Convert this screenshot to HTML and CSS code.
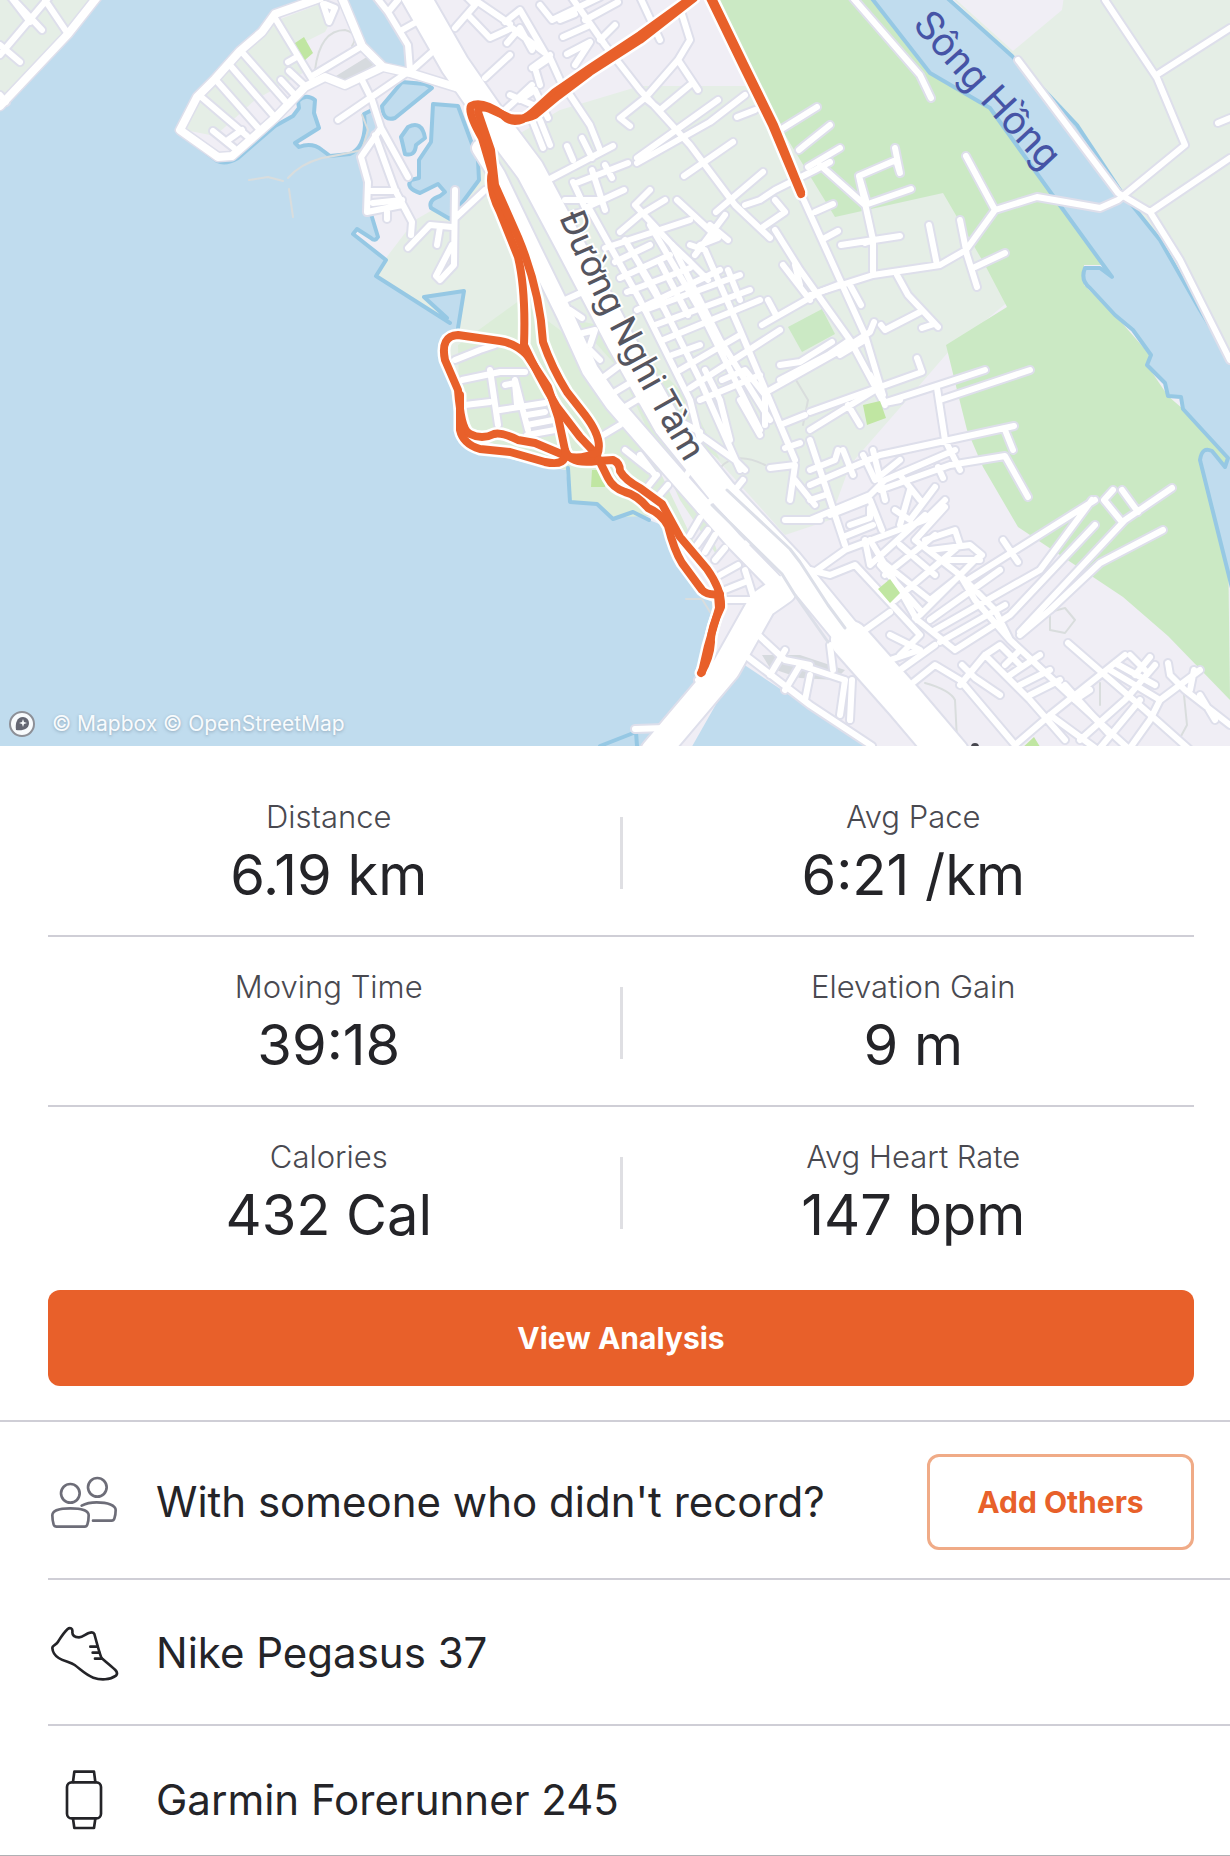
FILE: index.html
```
<!DOCTYPE html>
<html lang="en">
<head>
    <meta charset="UTF-8">
    <meta name="viewport" content="width=device-width, initial-scale=1.0">
    <title>Activity</title>
    <link rel="stylesheet" href="styles.css">
</head>
<body>
    <div class="map">
        <svg class="map-canvas" viewBox="0 0 1230 746" role="img" aria-label="Route map">
            <defs>
                <g id="streets">
                    <!-- west shore -->
                    <path d="M12 -2L42 30M45 0L68 34M50 -4L0 55M0 45L20 62M30 22L10 -4M0 95L6 102"/>
                    <!-- peninsula -->
                    <path d="M275 18L312 79M241 51L285 101M229 64L273 115M215 79L260 130M199 95L247 136M213 131L234 148M228 140L242 130M288 62L295 58M281 80L294 94M289 71L305 86M325 4L335 8L329 22L323 4M312 76L362 46M338 120L405 74M362 80L372 100L381 128L408 177M375 135L395 190L412 222L411 235M381 128L361 157L368 182L367 212L402 205M370 191L396 191M373 203L402 200M387 210L387 219M408 248L430 225L452 227M440 227L437 245M455 190L454 265L440 280L436 276L452 245M485 190L455 218"/>
                    <!-- north blocks -->
                    <path d="M377 -2L388 12L408 45L410 70M388 12L398 0M402 30L420 20M412 70L440 45M455 28L475 5L465 -5M468 15L490 38L512 28L545 53L520 10L505 22M475 0L510 24M507 43L520 28L532 50M485 78L510 55M505 110L532 85M510 95L533 105M532 68L550 55M540 85L535 68L550 58L560 80L590 125L600 150M520 100L535 90L548 118M530 115L543 148M540 120L550 145M570 -5L605 45L640 90L690 145L735 205L770 238M540 5L552 20L600 -3M560 20L575 14M563 37L590 25M567 54L590 42L575 65M585 20L618 2M600 40L615 25M640 -3L660 40M680 8L690 40L678 60L645 98M678 60L698 90M645 98L620 118L630 126M645 98L660 110L690 85"/>
                    <!-- middle blocks -->
                    <path d="M548 180L613 146M567 146L573 160M582 138L592 158M574 184L628 163M573 182L585 208L624 190M592 170L605 210M605 165L612 178M637 163L710 122L745 95M637 158L718 100M737 117L755 110M684 176L733 142M677 200L718 238M635 205L650 190M635 205L672 245L690 262L708 280M716 212L763 172M745 205L760 200L775 190L815 170L830 162M775 200L785 212L763 227M718 238L700 245M710 225L728 240M695 255L725 215M620 232L640 215L665 200M590 210L640 300L690 400L700 440M605 248L690 220M615 262L650 245M620 278L670 255M627 292L690 268M637 310L720 270M600 200L565 200M570 215L590 210M565 300L587 290M570 310L582 318M575 335L595 330L590 345M590 350L600 360"/>
                    <path d="M625 240L655 290L700 380L740 470M650 225L700 310L760 430M672 245L720 340L770 420M690 245L705 250L740 330L795 460M645 310L740 275M655 325L750 290M663 340L760 300M672 355L700 345M680 370L740 335M690 388L780 330M700 400L760 375M640 268L665 310M660 262L688 315M728 270L740 300M762 325L820 292L838 285M780 365L800 362L832 342M783 265L810 300M795 265L800 285M768 300L776 315M700 435L735 460L745 470M735 490L743 480M700 432L640 400M705 370L720 400L730 440M722 380L745 370L765 395L765 425M740 400L760 435M780 425L805 415M785 448L800 443M770 468L795 465L790 500M785 520L820 520M795 480L815 505M600 380L620 365M610 395L635 380M620 410L645 395M595 440L620 425M625 450L650 470M640 455L655 475"/>
                    <!-- lake shore estate -->
                    <path d="M455 360L480 350L495 345M462 380L500 372L525 372M490 370L498 425M465 405L490 402M515 380L528 430M500 410L545 403M505 385L515 383L517 405M527 415L545 412M527 425L553 420M527 435L555 430"/>
                    <path d="M645 490L657 475M655 500L668 485M690 535L700 518M697 545L708 530M705 552L715 535M715 560L725 548M720 575L738 565M725 590L745 582M720 600L750 600M745 570L755 602M690 470L680 485M712 500L700 510M735 515L725 525M755 535L745 545"/>
                    <!-- riverside -->
                    <path d="M780 130L817 107M799 150L805 145L830 125M808 167L840 148M820 165L865 205M866 200L859 176L896 160L900 173L895 148M865 205L911 189M859 176L873 240L873 272M841 245L900 236M865 243L873 240M929 225L937 265M960 220L967 255L977 287M966 156L995 210L966 250L940 265L873 275L810 295M975 267L1005 253M995 210L1037 197L1100 208L1118 200L1185 145L1157 78L1105 0M1158 74L1230 28M1218 123L1230 118M1150 212L1230 158M1118 193L1150 212L1180 260L1230 360M1018 60L1118 193M853 -2L920 75L931 98M801 194L840 280L865 335L883 395M775 230L800 270L850 340L885 405M815 212L833 204M825 238L838 231M850 285L861 305M897 275L908 295L938 327M920 312L885 330L881 325M922 328L934 324M850 345L870 332L874 322M850 345L770 390M850 340L828 355L780 380M865 340L840 355M917 358L922 372L810 412M886 402L936 386L985 370M940 400L1030 370M870 375L885 403L900 400"/>
                    <!-- east blocks -->
                    <path d="M810 430L875 390M848 405L860 425M937 388L945 440L960 470M843 450L853 475M863 455L875 480L900 460M873 450L885 500M868 500L830 515M870 500L882 530M810 485L880 455L1014 426M880 490L950 465L1005 456L1028 497M1005 430L1013 450M938 467L943 478M900 475L920 500M810 440L845 545M810 470L835 460L838 450M810 500L825 495M810 520L870 495L885 480L955 450M810 575L845 550L925 520L945 500M850 525L870 518L870 508M843 537L873 525M935 487L910 520L895 510M910 490L900 525M945 507L915 540L960 575L995 610L1010 640M925 515L870 565L865 540M880 560L930 600L955 580M880 565L920 610M870 540L900 590L917 620M900 545L935 575M895 600L960 545M885 575L935 535M920 615L980 555M930 620L1000 570M935 630L1040 570L1092 500M940 642L1005 605M955 650L1010 615L1095 525M915 618L955 650M1003 540L1018 562M968 580L1095 500M1020 632L1125 520L1172 488M1020 635L1050 610L1100 563L1163 530M1113 490L1104 500L1122 522M1122 490L1138 512M925 540L955 530L960 545M930 550L970 545L982 555M940 560L980 560M960 575L975 600L1010 640L1075 700L1130 750M890 635L920 650L890 660"/>
                    <path d="M810 570L830 575L855 565L920 635L900 655M865 630L890 612M900 670L935 645M910 685L935 665L960 680L1015 745M960 685L985 655L1030 700L1065 740M962 665L975 678L1000 695M985 655L1000 645L1020 665M1005 665L1020 650M1010 675L1040 655M1020 685L1050 670M1030 695L1060 680M1015 745L1050 715L1125 655M1068 643L1145 710L1190 750M1050 715L1095 748M1065 685L1110 735M1075 700L1090 690M1080 740L1125 700L1155 665M1110 670L1160 700L1150 720M1115 663L1155 685M1130 655L1145 670M1160 700L1200 670M1168 663L1170 675L1185 690L1230 725M1190 690L1194 670M1135 675L1150 657M1200 695L1215 720M1100 748L1140 700M1130 748L1150 720"/>
                    <path d="M755 632L785 660L810 665M745 655L810 705L872 746M770 675L785 650M785 690L800 665L845 680M805 700L810 675M845 680L840 715M852 680L850 720M830 645L833 670M635 729L665 728L675 740M698 680L710 695"/>
                </g>
                <g id="avenues">
                    <path d="M320 -2L275 14L262 32L240 51L215 79L197 97L180 130L218 157L232 156L275 118L305 87L325 77L345 85L383 67L410 73L465 90M342 -2L362 46L383 67M98 -4L68 34L0 106"/>
                </g>
                <g id="boulevard">
                    <path d="M480 148L497 175L533 250L565 315L590 370L613 403L667 465L733 540L780 588"/>
                </g>
                <g id="highways">
                    <path d="M412 -10L455 65L500 130L530 170L570 245L620 340L668 425L722 492L788 562L848 635L905 700L950 755"/>
                    <path d="M782 590L762 604L726 668L694 706L655 752"/>
                </g>
                <g id="interchange">
                    <path d="M850 640L905 702L950 755"/>
                </g>
                <g id="route">
                    <path d="M694 -4L640 35L590 68L555 92L533 112Q515 128 503 115Q482 100 471 106Q467 112 482 138L492 172Q488 188 500 212L518 257Q526 290 524 345Q538 375 557 407L580 437L597 455"/>
                    <path d="M694 -2L640 40L590 72L558 96L535 115Q525 120 510 118L490 109Q478 105 478 112L491 150L495 185L518 237Q540 290 543 342Q552 368 567 392L585 415Q604 440 597 455"/>
                    <path d="M527 355Q515 343 500 341L458 335Q440 336 445 360L458 390Q461 430 470 434Q482 440 494 434Q502 432 518 440L535 443L566 456Q580 460 597 453"/>
                    <path d="M460 395V430Q463 444 480 449L510 452L545 462Q568 467 565 450L558 417L548 387L527 355"/>
                    <path d="M565 450Q570 465 597 461L613 460Q620 463 620 471Q625 480 640 488L662 504L680 537L707 569Q722 590 721 607Q710 630 711 642Q710 658 701 673"/>
                    <path d="M599 460L608 478Q613 488 625 492Q637 495 648 508Q662 514 668 526Q674 550 682 563L702 590Q708 596 720 594M718 595L719 608L708 646L702 672"/>
                    <path d="M709 -4L742 64L772 125L801 194M711 -4L744 64L774 125L801 192"/>
                </g>
            </defs>

            <rect class="water" width="1230" height="746"/>

            <path class="land-green" d="M0 0H98L70 34L0 108Z"/>
            <path class="land" d="M320 -4L275 14L262 32L240 51L215 79L197 97L180 130L217 160Q226 166 238 158L275 126L293 116L299 108L298 101Q306 93 315 100L314 113L319 128L295 143L299 147Q312 142 322 150L330 156L350 154Q364 148 365 125L364 115L378 108L381 130L362 157L370 182L368 212L378 237Q375 242 371 238L357 229L353 234L386 260L376 276L448 322L424 297L464 291L458 328L443 345L455 385L458 430L470 450L545 467L566 470L570 502L597 504L613 519L633 512L649 520L667 527L677 560L703 597L718 605L708 646L696 688L650 750H690L740 662L872 750H1240V-4H377L408 45V68L383 67L362 46L342 -4Z"/>
            <path class="land-green" d="M278 20L320 4L337 10L325 32L297 46L308 70L255 100L215 136L185 130L199 97L240 51Z"/>
            <path class="land-green" d="M376 276L386 258L415 220L450 200L480 165L500 145L560 110L640 86H745L960 200L1010 300L950 350L905 402L850 465L830 520L785 535L700 440L597 504L570 502L566 470L458 430L443 345L458 328L464 291L424 297L448 322Z"/>
            <path class="land-lawn" d="M520 300L458 345L460 430L545 465L568 470L570 502L597 504L613 517L660 516L700 560L712 580L640 430L560 330Z"/>
            <path class="land-lawn" d="M575 320L620 370L680 500L720 560L700 500L680 430L720 460L690 400L620 330Z"/>
            <path class="park" d="M708 -4H880L930 73L990 108L1051 193L1105 265H1084V285L1115 315L1150 355L1147 365L1168 396L1183 409L1227 455L1230 700L1168 636L1123 597L1018 527L983 467L967 430L957 390L946 345L1007 307L985 265L943 193L835 217L785 135Z"/>
            <path class="park" d="M788 327L822 309L835 334L802 352Z"/>
            <path class="land-green" d="M950 -4L1012 56L1077 125L1120 190L1160 240L1200 310L1230 365V-4Z"/>
            <path class="built" d="M336 76L370 55L378 62L345 84ZM762 655L800 655L845 670L835 680L800 678L770 668Z"/>

            <path class="water shore" d="M870 -4L930 73L990 108L1051 193L1112 277L1100 268H1085Q1080 280 1090 288L1115 315L1133 330L1151 355L1147 365L1165 383L1168 396L1181 397L1183 409L1228 458L1225 467L1212 451Q1202 446 1200 460L1240 620V375L1200 310L1160 240L1120 190L1077 125L1012 56L945 -4Z"/>
            <path class="land" d="M952 -4H1064L1062 10L1013 51Z"/>
            <path class="water shore" d="M433 104L458 106L478 160L479 180L450 219L431 208Q428 200 440 196L445 192L438 184L420 193Q405 188 411 180L419 178V160L431 142Z"/>
            <path class="water shore" d="M401 137L408 127Q422 120 425 138L416 145Q415 157 405 154Z"/>
            <path class="water shore" d="M382 106L402 82L425 84L432 88L395 118Q383 122 382 106Z"/>
            <path class="water" d="M348 -4H377L408 45V68L385 64L364 44Z"/>
            <path class="coast" d="M178 132L217 161Q226 165 238 158L275 126L293 116L299 108L298 101Q306 93 315 100L314 113L319 128L295 143L299 147Q312 142 322 150L330 156L350 154Q364 148 365 125L364 114L376 108M361 157L370 182M371 214L378 237Q375 242 371 238L357 229L353 234L386 260L376 276L450 323M424 297L464 291L458 328M424 297L447 318M568 468L570 502L597 504L613 519L633 512L649 520M696 688L672 720M600 746L636 732L637 746M275 14L320 -2"/>
            <path class="trail" d="M315 70Q320 30 345 30Q360 34 352 46M362 115L368 130L362 150Q340 155 322 158Q300 164 288 178M249 180L268 177L283 181M289 189L293 217M686 599H702L710 612M925 683Q950 690 955 700L957 740M1050 612L1065 608L1075 620L1065 633L1050 630ZM1100 683V705M1184 695L1187 725L1180 738M720 468Q735 450 765 465M793 375L808 400L803 425"/>

            <use class="street-case" href="#streets"/>
            <use class="avenue-case" href="#avenues"/>
            <use class="boulevard-case" href="#boulevard"/>
            <use class="highway-case" href="#highways"/>
            <use class="interchange-case" href="#interchange"/>
            <use class="street" href="#streets"/>
            <use class="avenue" href="#avenues"/>
            <use class="boulevard" href="#boulevard"/>
            <use class="highway" href="#highways"/>
            <use class="interchange" href="#interchange"/>
            <path class="garden" d="M295 43L304 37L313 53L305 60ZM863 405L880 401L886 418L867 425ZM878 589L890 579L900 593L890 603ZM592 470H605V487H591ZM1020 750L1034 737L1042 750Z"/>
            <path class="median" d="M727 490L790 549L800 562L828 605L845 628M712 505L782 574L795 595L828 642"/>
            <circle class="poi" cx="975" cy="747" r="4"/>

            <path id="street-name" class="guide" d="M559 217Q600 320 686 464"/>
            <path id="river-name" class="guide" d="M912 26Q970 92 1056 184"/>
            <text class="map-label"><textPath href="#street-name">Đường Nghi Tàm</textPath></text>
            <text class="map-label river"><textPath href="#river-name">Sông Hồng</textPath></text>

            <use class="route-case" href="#route"/>
            <use class="route" href="#route"/>
        </svg>
        <div class="attribution">
            <svg class="mapbox-logo" viewBox="0 0 28 28" aria-hidden="true">
                <circle cx="14" cy="14" r="12" fill="#fff" stroke="#88888e" stroke-width="2"/>
                <path d="M8 20C7 13 9 7 15 7A6 6 0 0 1 21 13C21 19 15 21 8 20Z" fill="#5b5b66"/>
                <path d="M15 9L16 12L19 13L16 14L15 17L14 14L11 13L14 12Z" fill="#fff"/>
            </svg>
            <span>© Mapbox © OpenStreetMap</span>
        </div>
    </div>

    <div class="stats">
        <div class="stat-row">
            <div class="stat"><div class="stat-label">Distance</div><div class="stat-value">6.19 km</div></div>
            <div class="stat-divider"></div>
            <div class="stat"><div class="stat-label">Avg Pace</div><div class="stat-value">6:21 /km</div></div>
        </div>
        <div class="stat-row">
            <div class="stat"><div class="stat-label">Moving Time</div><div class="stat-value">39:18</div></div>
            <div class="stat-divider"></div>
            <div class="stat"><div class="stat-label">Elevation Gain</div><div class="stat-value">9 m</div></div>
        </div>
        <div class="stat-row">
            <div class="stat"><div class="stat-label">Calories</div><div class="stat-value">432 Cal</div></div>
            <div class="stat-divider"></div>
            <div class="stat"><div class="stat-label">Avg Heart Rate</div><div class="stat-value">147 bpm</div></div>
        </div>
        <button class="btn btn-primary" type="button">View Analysis</button>
    </div>

    <div class="details">
        <div class="detail-row with-others">
            <svg class="icon icon-people" viewBox="54 42 216 216" aria-hidden="true">
                <circle cx="121" cy="124" r="28"/>
                <circle cx="202" cy="106" r="28"/>
                <path d="M67 190C67 174 94 169 121 169S176 174 176 190Q176 207 172 218Q170 224 164 224H80Q73 224 71 218Q67 205 67 190Z"/>
                <path d="M155 161C170 153 185 151 200 151C234 151 257 160 257 174Q257 189 253 200Q251 206 245 206H189"/>
            </svg>
            <span class="detail-text">With someone who didn't record?</span>
            <button class="btn btn-outline" type="button">Add Others</button>
        </div>
        <div class="detail-row">
            <svg class="icon" viewBox="54 501 216 216" aria-hidden="true">
                <path d="M127 547C129 535 120 531 113 537C100 549 92 563 83 577C78 585 67 586 67 594C68 608 75 617 86 624C102 634 122 637 134 645C152 658 168 675 190 683C212 691 240 690 258 677C263 671 261 665 256 660C243 648 228 636 215 625C208 610 201 580 193 552C190 544 182 547 176 549C165 554 157 562 147 562C136 562 127 559 127 547Z"/>
                <path d="M181 590H202M188 608H208M195 626H216"/>
            </svg>
            <span class="detail-text">Nike Pegasus 37</span>
        </div>
        <div class="detail-row">
            <svg class="icon" viewBox="54 942 216 216" aria-hidden="true">
                <rect x="111" y="997" width="102" height="108" rx="14"/>
                <path d="M129 996L133 965H192L196 996M129 1106L133 1134H192L196 1106"/>
            </svg>
            <span class="detail-text">Garmin Forerunner 245</span>
        </div>
    </div>
</body>
</html>
```

FILE: styles.css
```
* {
    box-sizing: border-box;
}
body {
    margin: 0;
    background: #fff;
    color: #242428;
    font-family: Inter, "Liberation Sans", sans-serif;
}

/* map */
.map {
    position: relative;
}
.map-canvas {
    display: block;
    width: 100%;
    height: auto;
}
.map-canvas path,
.map-canvas use {
    stroke-linecap: round;
    stroke-linejoin: round;
}
.water {
    fill: #c0dcee;
}
.land {
    fill: #f0eef5;
}
.land-green {
    fill: #e5eee6;
}
.land-lawn {
    fill: #dcedd9;
}
.park {
    fill: #cbe9c4;
}
.garden {
    fill: #c0e6a2;
}
.built {
    fill: #d6dade;
}
.shore {
    stroke: #96c8e4;
    stroke-width: 4;
}
.coast {
    fill: none;
    stroke: #96c8e4;
    stroke-width: 4;
}
.trail {
    fill: none;
    stroke: #d9dddd;
    stroke-width: 2;
}
.street-case {
    fill: none;
    stroke: #dedfeb;
    stroke-width: 10;
}
.street {
    fill: none;
    stroke: #fff;
    stroke-width: 6;
}
.avenue-case {
    fill: none;
    stroke: #dedfeb;
    stroke-width: 11;
}
.avenue {
    fill: none;
    stroke: #fff;
    stroke-width: 8;
}
.boulevard-case {
    fill: none;
    stroke: #dedfeb;
    stroke-width: 20;
}
.boulevard {
    fill: none;
    stroke: #fff;
    stroke-width: 16;
}
.highway-case {
    fill: none;
    stroke: #dedfeb;
    stroke-width: 32;
}
.highway {
    fill: none;
    stroke: #fff;
    stroke-width: 28;
}
.interchange-case {
    fill: none;
    stroke: #dedfeb;
    stroke-width: 42;
}
.interchange {
    fill: none;
    stroke: #fff;
    stroke-width: 38;
}
.median {
    fill: none;
    stroke: #dcdfe8;
    stroke-width: 3;
}
.poi {
    fill: #47474f;
}
.guide {
    fill: none;
}
.map-label {
    fill: #55555f;
    stroke: #fff;
    stroke-width: 4;
    paint-order: stroke;
    font-family: Roboto, "Noto Sans", sans-serif;
    font-size: 37px;
}
.map-label.river {
    fill: #4654a6;
    stroke: none;
    font-size: 40px;
}
.route-case {
    fill: none;
    stroke: #fff;
    stroke-width: 13;
}
.route {
    fill: none;
    stroke: #e8602a;
    stroke-width: 8;
}
.attribution {
    position: absolute;
    left: 8px;
    bottom: 8px;
    display: flex;
    align-items: center;
    gap: 16px;
    color: #fff;
    font-size: 21px;
    font-weight: 400;
    line-height: 28px;
    opacity: 0.9;
    text-shadow: 0 1px 3px rgba(90, 110, 130, 0.5);
}
.mapbox-logo {
    width: 28px;
    height: 28px;
}

/* stats */
.stats {
    padding: 21px 36px 34px 48px;
}
.stat-row {
    display: grid;
    grid-template-columns: 1fr 3px 1fr;
    align-items: center;
    column-gap: 10px;
    height: 170px;
    padding-top: 4px;
    border-bottom: 2px solid #cfced6;
    text-align: center;
}
.stat-row:nth-child(3) {
    border-bottom-color: transparent;
}
.stat-label {
    color: #494950;
    font-size: 31px;
    font-weight: 300;
    line-height: 40px;
}
.stat-value {
    margin-top: 4px;
    font-size: 56px;
    line-height: 68px;
}
.stat-divider {
    height: 72px;
    background: #dfdfe3;
}
.btn {
    height: 96px;
    border-radius: 12px;
    font-family: inherit;
    font-size: 30px;
    font-weight: 700;
    cursor: pointer;
}
.btn-primary {
    display: block;
    width: 100%;
    margin-top: 13px;
    border: none;
    background: #e8602a;
    color: #fff;
}
.btn-outline {
    width: 267px;
    margin-left: auto;
    border: 3px solid #f0ab87;
    background: #fff;
    color: #e8602a;
}

/* gear and people */
.details {
    padding-left: 48px;
    border-top: 2px solid #cfced6;
    border-bottom: 1px solid #b0b0b4;
}
.detail-row {
    display: flex;
    align-items: center;
    gap: 36px;
    height: 146px;
    padding-top: 2px;
    padding-right: 36px;
    border-bottom: 2px solid #cfced6;
}
.detail-row.with-others {
    height: 158px;
    padding-top: 4px;
}
.detail-row:last-child {
    height: 129px;
    padding-top: 18px;
    border-bottom: none;
}
.detail-text {
    font-size: 42px;
    line-height: 56px;
}
.icon {
    flex: none;
    width: 72px;
    height: 72px;
    fill: none;
    stroke: #242428;
    stroke-width: 8;
    stroke-linecap: round;
    stroke-linejoin: round;
}
.icon-people {
    stroke: #6d6d78;
}
```
